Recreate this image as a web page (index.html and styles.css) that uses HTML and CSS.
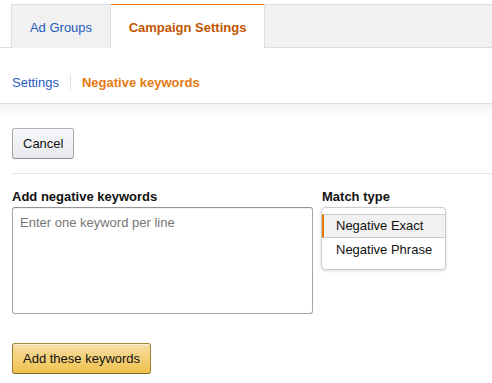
FILE: index.html
```html
<!DOCTYPE html>
<html>
<head>
<meta charset="utf-8">
<link rel="stylesheet" href="styles.css">
</head>
<body>
<div class="tabbar">
  <div class="tab">Ad Groups</div>
  <div class="tab active">Campaign Settings</div>
  <div class="tab-fill"></div>
</div>
<div class="subnav">
  <a class="sublink">Settings</a>
  <span class="sep"></span>
  <a class="sublink current">Negative keywords</a>
</div>
<div class="content">
  <button class="btn">Cancel</button>
  <hr class="divider">
  <div class="form-row">
    <div class="col-kw">
      <label class="label">Add negative keywords</label>
      <textarea class="kw-input" placeholder="Enter one keyword per line"></textarea>
    </div>
    <div class="col-match">
      <label class="label">Match type</label>
      <div class="listbox">
        <div class="option selected">Negative Exact</div>
        <div class="option">Negative Phrase</div>
      </div>
    </div>
  </div>
  <button class="btn btn-primary">Add these keywords</button>
</div>
</body>
</html>
```
FILE: styles.css
```css
html, body {
  margin: 0;
  padding: 0;
  background: #fff;
  font-family: "Liberation Sans", Arial, sans-serif;
  font-size: 13px;
  color: #111;
}
.tabbar {
  display: flex;
  margin-top: 4px;
  height: 43px;
  border-bottom: 1px solid #ddd;
  padding-left: 11px;
}
.tab {
  box-sizing: border-box;
  width: 100px;
  height: 44px;
  background: #f1f1f1;
  border: 1px solid #ddd;
  border-bottom: none;
  display: flex;
  align-items: center;
  justify-content: center;
  color: #1f5bbf;
  font-size: 13px;
  padding-top: 1px;
}
.tab.active {
  width: 153px;
  background: #fff;
  border-left: none;
  border-right: none;
  border-top: 1px solid #e77600;
  color: #c45500;
  font-weight: bold;
  height: 44px;
  position: relative;
  z-index: 1;
}
.tab-fill {
  flex: 1;
  background: #f1f1f1;
  border-top: 1px solid #ddd;
  border-left: 1px solid #ddd;
}
.subnav {
  box-sizing: border-box;
  height: 56px;
  display: flex;
  align-items: flex-start;
  padding: 27px 0 0 12px;
  border-bottom: 1px solid #ddd;
  line-height: 15px;
}
.sublink {
  color: #1f5bbf;
  font-size: 13px;
}
.sublink.current {
  color: #e47911;
  font-weight: bold;
}
.sep {
  width: 1px;
  height: 17px;
  background: #e3e3e3;
  margin: -1px 11px 0 11px;
}
.content {
  background: linear-gradient(#f4f4f4, #fff 12px);
  padding: 24px 0 0 12px;
}
.btn {
  font-family: "Liberation Sans", Arial, sans-serif;
  font-size: 13px;
  color: #111;
  height: 31px;
  padding: 0 10px;
  border: 1px solid #adb1b8;
  border-color: #adb1b8 #a2a6ac #8d9096;
  border-radius: 3px;
  background: linear-gradient(#f7f8fa, #e7e9ec);
  box-shadow: inset 0 1px 0 rgba(255,255,255,0.6);
  display: block;
  white-space: nowrap;
}
.divider {
  border: none;
  border-top: 1px solid #e7e7e7;
  margin: 14px 0 15px 0;
  height: 0;
}
.form-row {
  display: flex;
  gap: 9px;
}
.label {
  display: block;
  font-weight: bold;
  font-size: 13px;
  margin-bottom: 3px;
  line-height: 15px;
}
.kw-input {
  box-sizing: border-box;
  width: 301px;
  height: 107px;
  border: 1px solid #a6a6a6;
  border-top-color: #949494;
  border-radius: 3px;
  padding: 7px 7px;
  resize: none;
  font-family: "Liberation Sans", Arial, sans-serif;
  font-size: 13px;
  display: block;
  margin: 0;
  box-shadow: inset 0 1px 0 rgba(0,0,0,0.05);
}
.kw-input::placeholder {
  color: #767676;
}
.listbox {
  box-sizing: border-box;
  width: 125px;
  height: 63px;
  border: 1px solid #ccc;
  border-radius: 4px;
  box-shadow: 0 1px 3px rgba(0,0,0,0.15);
  padding-top: 6px;
  margin-top: 1px;
  margin-left: -1px;
}
.option {
  height: 24px;
  line-height: 24px;
  padding-left: 14px;
  font-size: 13px;
  color: #111;
  box-sizing: border-box;
}
.option.selected {
  background: #f1f1f1;
  border-top: 1px solid #ccc;
  border-bottom: 1px solid #ccc;
  border-left: 2px solid #e77600;
  padding-left: 12px;
  line-height: 22px;
}
.btn-primary {
  margin-top: 29px;
  border-color: #a88734 #9c7e31 #846a29;
  background: linear-gradient(#f7dfa5, #f0c14b);
  padding: 0 10px;
}
```
